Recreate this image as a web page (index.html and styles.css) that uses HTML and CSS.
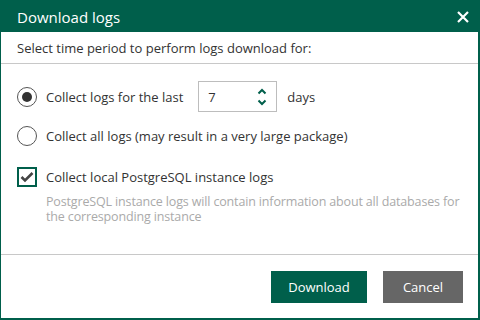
FILE: index.html
```html
<!DOCTYPE html>
<html lang="en">

<head>
    <meta charset="UTF-8">
    <title>Download logs</title>
    <link rel="stylesheet" href="styles.css">
</head>

<body>
    <div class="dialog">
        <div class="dialog-header">
            <span class="dialog-title">Download logs</span>
            <svg class="close-icon" width="12" height="12" viewBox="0 0 12 12">
                <path d="M1 1 L11 11 M11 1 L1 11" stroke="#fff" stroke-width="2.2" fill="none" />
            </svg>
        </div>
        <div class="intro">Select time period to perform logs download for:</div>
        <div class="dialog-body">
            <div class="option-row">
                <span class="radio checked"></span>
                <span class="label">Collect logs for the last</span>
                <div class="spinner">
                    <span class="spinner-value">7</span>
                    <div class="spinner-arrows">
                        <svg width="10" height="7" viewBox="0 0 10 7">
                            <path d="M1.5 5.5 L5 2 L8.5 5.5" stroke="#005f4b" stroke-width="2" fill="none" />
                        </svg>
                        <svg width="10" height="7" viewBox="0 0 10 7">
                            <path d="M1.5 1.5 L5 5 L8.5 1.5" stroke="#005f4b" stroke-width="2" fill="none" />
                        </svg>
                    </div>
                </div>
                <span class="label">days</span>
            </div>
            <div class="option-row second">
                <span class="radio"></span>
                <span class="label">Collect all logs (may result in a very large package)</span>
            </div>
            <div class="option-row check-row">
                <span class="checkbox">
                    <svg width="14" height="12" viewBox="0 0 14 12">
                        <path d="M1.5 6 L5 9.5 L12.5 2" stroke="#444" stroke-width="2.6" fill="none" />
                    </svg>
                </span>
                <span class="label">Collect local PostgreSQL instance logs</span>
            </div>
            <p class="hint">PostgreSQL instance logs will contain information about all databases for the corresponding instance</p>
        </div>
        <div class="dialog-footer">
            <button class="btn btn-primary">Download</button>
            <button class="btn btn-secondary">Cancel</button>
        </div>
    </div>
</body>

</html>
```

FILE: styles.css
```css
body,
html {
    margin: 0;
    padding: 0;
    font-family: "Open Sans", sans-serif;
    font-size: 13px;
    color: #333;
}

.dialog {
    width: 480px;
    height: 320px;
    box-sizing: border-box;
    border: 1px solid #005f4b;
    border-right-width: 2px;
    border-bottom-width: 2px;
    display: flex;
    flex-direction: column;
    background: #fff;
}

.dialog-header {
    height: 31px;
    flex: none;
    background-color: #005f4b;
    color: #fff;
    display: flex;
    align-items: center;
    justify-content: space-between;
    padding: 0 9px 0 16px;
}

.dialog-title {
    font-size: 15px;
}

.intro {
    height: 32px;
    flex: none;
    box-sizing: border-box;
    border-bottom: 1px solid #c8c8c8;
    display: flex;
    align-items: center;
    padding-left: 16px;
}

.dialog-body {
    flex: 1;
    padding: 17px 16px 0 16px;
}

.option-row {
    display: flex;
    align-items: center;
}

.option-row.second {
    margin-top: 14px;
}

.option-row.check-row {
    margin-top: 21px;
}

.radio {
    width: 18px;
    height: 18px;
    border: 1px solid #555;
    border-radius: 50%;
    display: flex;
    align-items: center;
    justify-content: center;
    margin-right: 9px;
}

.radio.checked::after {
    content: "";
    width: 10px;
    height: 10px;
    border-radius: 50%;
    background: #333;
}

.checkbox {
    width: 16px;
    height: 16px;
    border: 2px solid #005f4b;
    display: flex;
    align-items: center;
    justify-content: center;
    margin-right: 9px;
}

.spinner {
    width: 59px;
    height: 29px;
    border: 1px solid #bdbdbd;
    display: flex;
    align-items: center;
    justify-content: space-between;
    margin: 0 10px 0 15px;
    padding: 0 9px 0 9px;
}

.spinner-arrows {
    display: flex;
    flex-direction: column;
    gap: 4px;
}

.spinner-arrows svg {
    display: block;
}

.hint {
    margin: 7px -10px 0 29px;
    color: #aaa;
    font-size: 12.5px;
    line-height: 15px;
    letter-spacing: -0.15px;
}

.dialog-footer {
    height: 64px;
    flex: none;
    box-sizing: border-box;
    border-top: 1px solid #c8c8c8;
    display: flex;
    justify-content: flex-end;
    align-items: center;
    gap: 16px;
    padding: 0 15px 0 0;
}

.btn {
    height: 32px;
    border: none;
    color: #fff;
    font-family: "Open Sans", sans-serif;
    font-size: 13px;
    padding: 0;
}

.btn-primary {
    width: 96px;
    background: #005f4b;
}

.btn-secondary {
    width: 80px;
    background: #666;
}
```
